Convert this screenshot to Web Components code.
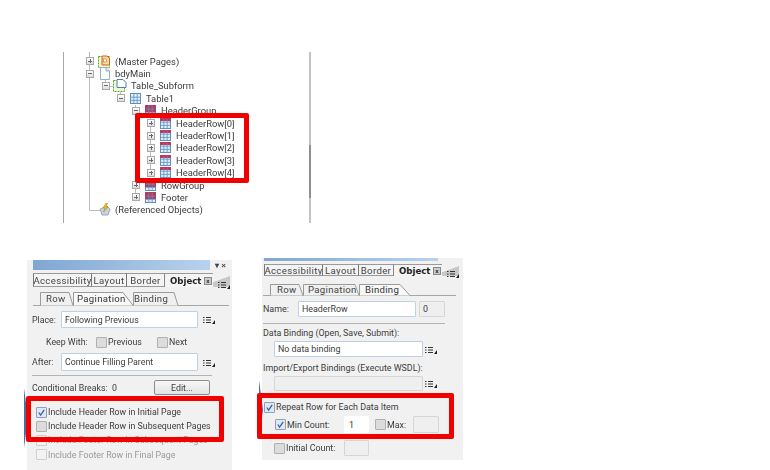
<!DOCTYPE html>
<html>
<head>
<meta charset="utf-8">
<title>Table header rows</title>
<style>
  html, body { margin: 0; background: #fff; }
  body { width: 770px; height: 470px; overflow: hidden; font: 9.5px Roboto, "Open Sans", sans-serif; color: #333; }
</style>
</head>
<body>
<screen-shot>
  <tree-view>
    <tree-row depth="0" toggle="plus" icon="master">(Master Pages)</tree-row>
    <tree-row depth="0" toggle="minus" icon="page">bdyMain</tree-row>
    <tree-row depth="1" toggle="minus" icon="subform">Table_Subform</tree-row>
    <tree-row depth="2" toggle="minus" icon="table">Table1</tree-row>
    <tree-row depth="3" toggle="minus" icon="group">HeaderGroup</tree-row>
    <tree-row depth="4" toggle="plus" icon="row">HeaderRow[0]</tree-row>
    <tree-row depth="4" toggle="plus" icon="row">HeaderRow[1]</tree-row>
    <tree-row depth="4" toggle="plus" icon="row">HeaderRow[2]</tree-row>
    <tree-row depth="4" toggle="plus" icon="row">HeaderRow[3]</tree-row>
    <tree-row depth="4" toggle="plus" icon="row">HeaderRow[4]</tree-row>
    <tree-row depth="3" toggle="plus" icon="group">RowGroup</tree-row>
    <tree-row depth="3" toggle="plus" icon="group">Footer</tree-row>
    <tree-row depth="0" icon="refs">(Referenced Objects)</tree-row>
  </tree-view>

  <object-panel style="left:27px;top:260px;width:205px;height:210px;font-size:8.8px" bar="177" barh="10" pad="6">
    <main-tabs slot="tabs" widths="58,35,38" h="14" style="padding-left:6px">
      <span>Accessibility</span><span>Layout</span><span>Border</span>
    </main-tabs>
    <sub-tab-strip slot="tabs" style="margin:5px 3px 0 6px;padding-left:7px">
      <sub-tab w="33" h="13" pl="6">Row</sub-tab>
      <sub-tab w="60" h="13" pl="4" active>Pagination</sub-tab>
      <sub-tab w="45" h="13" pl="1">Binding</sub-tab>
    </sub-tab-strip>

    <form-row style="margin-top:5px;height:17px">
      <span style="width:29px">Place:</span>
      <text-box w="137">Following Previous</text-box>
      <menu-icon style="margin-left:5px"></menu-icon>
    </form-row>
    <form-row style="margin-top:7px;height:14px;padding-left:14px">
      <span style="width:50px">Keep With:</span>
      <check-box style="width:61px">Previous</check-box>
      <check-box>Next</check-box>
    </form-row>
    <form-row style="margin-top:4px;height:18px">
      <span style="width:29px">After:</span>
      <text-box w="137">Continue Filling Parent</text-box>
      <menu-icon style="margin-left:5px"></menu-icon>
    </form-row>
    <panel-rule style="margin-top:4px;margin-right:20px"></panel-rule>
    <form-row style="margin-top:4px;height:15px">
      <span style="width:122px">Conditional Breaks:&nbsp; 0</span>
      <push-button w="56">Edit...</push-button>
    </form-row>
    <form-row style="margin-top:10px;height:14px;padding-left:4px"><check-box checked>Include Header Row in Initial Page</check-box></form-row>
    <form-row style="height:14px;padding-left:4px"><check-box>Include Header Row in Subsequent Pages</check-box></form-row>
    <form-row style="height:14.5px;padding-left:4px"><check-box disabled>Include Footer Row in Subsequent Pages</check-box></form-row>
    <form-row style="height:14.5px;padding-left:4px"><check-box disabled>Include Footer Row in Final Page</check-box></form-row>
  </object-panel>

  <object-panel style="left:262px;top:258px;width:201px;height:202px;font-size:8.9px" bar="174" barh="3" pad="2" wedge="122">
    <main-tabs slot="tabs" widths="58,36,35" h="12" style="margin-top:3px">
      <span>Accessibility</span><span>Layout</span><span>Border</span>
    </main-tabs>
    <sub-tab-strip slot="tabs" style="margin:8px 7px 0 1px;padding-left:7px">
      <sub-tab w="33" h="11" pl="7">Row</sub-tab>
      <sub-tab w="56" h="11" pl="5">Pagination</sub-tab>
      <sub-tab w="51" h="11" pl="6" active>Binding</sub-tab>
    </sub-tab-strip>

    <form-row style="margin-top:5px;height:16px">
      <span style="width:35px">Name:</span>
      <text-box w="118">HeaderRow</text-box>
      <text-box w="26" style="margin-left:3px" muted>0</text-box>
    </form-row>
    <panel-rule style="margin-top:6px;margin-right:18px"></panel-rule>
    <form-row style="margin-top:3px;height:12px"><span>Data Binding (Open, Save, Submit):</span></form-row>
    <form-row style="margin-top:2px;height:16px;padding-left:11px">
      <text-box w="149">No data binding</text-box>
      <menu-icon style="margin-left:2px"></menu-icon>
    </form-row>
    <form-row style="margin-top:5px;height:12px"><span>Import/Export Bindings (Execute WSDL):</span></form-row>
    <form-row style="margin-top:2px;height:15px;padding-left:11px">
      <text-box w="149" muted></text-box>
      <menu-icon style="margin-left:2px"></menu-icon>
    </form-row>
    <form-row style="margin-top:10px;height:12px;padding-left:1px"><check-box checked>Repeat Row for Each Data Item</check-box></form-row>
    <form-row style="margin-top:3px;height:17px;padding-left:12px">
      <check-box checked style="width:69px">Min Count:</check-box>
      <text-box w="25" plain>1</text-box>
      <check-box style="margin-left:6px;width:38px">Max:</check-box>
      <text-box w="26" muted></text-box>
    </form-row>
    <form-row style="margin-top:7px;height:16px;padding-left:11px">
      <check-box style="width:70px">Initial Count:</check-box>
      <text-box w="25" muted></text-box>
    </form-row>
  </object-panel>

  <red-mark style="left:135px;top:113px;width:114px;height:70px"></red-mark>
  <red-mark style="left:26px;top:396px;width:198px;height:46px"></red-mark>
  <red-mark style="left:257px;top:393px;width:197px;height:46px"></red-mark>
</screen-shot>

<script>
function tpl(html) {
  const t = document.createElement('template');
  t.innerHTML = html;
  return t;
}

class Base extends HTMLElement {
  constructor() {
    super();
    this.attachShadow({ mode: 'open' });
    this.shadowRoot.appendChild(this.constructor.template.content.cloneNode(true));
  }
}

class ScreenShot extends Base {
  static template = tpl(`<style>
    :host { display: block; position: relative; width: 770px; height: 470px; overflow: hidden; }
  </style><slot></slot>`);
}

const gridIcon = (head, color) => `<svg width="11" height="11" viewBox="0 0 11 11">
  <rect x=".5" y=".5" width="10" height="10" fill="#e3edf7" stroke="#5b90bf"/>
  <rect x="0" y="0" width="11" height="${head}" fill="${color}"/>
  <path d="M3.800 1v9M7.200 1v9M1 4.200h9M1 7.400h9" stroke="#5b90bf" stroke-width=".8"/></svg>`;

const treeIcons = {
  master: `<svg style="margin-left:-1px" width="13" height="13" viewBox="0 0 13 13">
    <rect x=".5" y="1.500" width="11" height="11" fill="#eef7d8" stroke="#5aa82a" stroke-dasharray="2 1"/>
    <path d="M4 1h5l2.500 2.500V10H4z" fill="#f9d9a8" stroke="#c9651a"/><rect x="5.500" y="4" width="3" height="3" fill="#fff" stroke="#c9651a" stroke-width=".6"/></svg>`,
  page: `<svg style="margin-left:1px" width="10" height="13" viewBox="0 0 10 13">
    <path d="M.5.500h5.500l3.500 3.500v8.500H.5z" fill="#fff" stroke="#94aec8"/><path d="M6 .5V4h3.500" fill="#dbe6f1" stroke="#94aec8"/></svg>`,
  subform: `<svg style="margin-left:-2px" width="14" height="13" viewBox="0 0 14 13">
    <rect x=".5" y="1.500" width="11" height="11" fill="#f0f8dc" stroke="#5aa82a" stroke-dasharray="2 1"/>
    <path d="M4 .5h6l3 3v5H4z" fill="#fff" stroke="#4e7fae"/></svg>`,
  table: gridIcon(0, '#8fb6d8'),
  group: gridIcon(7, '#b63a60'),
  row: gridIcon(3, '#c2355a'),
  refs: `<svg style="margin-left:-1px" width="14" height="13" viewBox="0 0 14 13">
    <path d="M2 6l7-3 3 3-2 6H4z" fill="#c6d2e2" stroke="#8b9bb0" stroke-width=".8"/>
    <path d="M8 0L5 5h2L5.500 9 10 4H8l1.500-4z" fill="#f0c020" stroke="#a9820c" stroke-width=".5"/></svg>`
};

class TreeView extends Base {
  static template = tpl(`<style>
    :host { display: block; position: absolute; left: 63px; top: 52px; width: 248px; height: 171px; box-sizing: border-box;
      border-left: 1px solid #a8a8a8; border-right: 2px solid #c4c4c4; padding-top: 3px; filter: blur(.3px); }
    :host::after { content: ""; position: absolute; right: -2px; top: 93px; width: 2px; height: 53px; background: #8f8f8f; }
    svg { position: absolute; left: 0; top: 0; }
    ::slotted(*) { position: relative; }
  </style>
  <svg width="245" height="171" fill="none" stroke="#bdbdbd" stroke-width="1">
    <path d="M25.500 0V158.500H36M41.500 28V34.500H50M56.500 40V47M71.500 53V59.500M86.500 65V121.500M71.500 65V146.500"/>
  </svg>
  <slot></slot>`);
}

class TreeRow extends Base {
  static template = tpl(`<style>
    :host { display: flex; align-items: center; height: 12.4px; font: 9.4px Roboto, "Open Sans", sans-serif; color: #3a3a3a; white-space: nowrap; }
    .toggle { width: 6px; height: 6px; border: 1px solid #a9a9a9; background: linear-gradient(#fff, #ddd); flex: none; position: relative; margin-right: 5px; }
    .toggle.none { visibility: hidden; }
    .toggle::before { content: ""; position: absolute; left: 1px; right: 1px; top: 2.500px; height: 1px; background: #667; }
    .toggle.plus::after { content: ""; position: absolute; top: 1px; bottom: 1px; left: 2.500px; width: 1px; background: #667; }
    .icon { display: flex; width: 15px; flex: none; }
    .label { margin-left: 1px; }
  </style><span class="toggle"></span><span class="icon"></span><span class="label"><slot></slot></span>`);
  connectedCallback() {
    const depth = +this.getAttribute('depth');
    this.style.paddingLeft = (22 + [0, 16, 31, 46, 61][depth]) + 'px';
    const t = this.shadowRoot.querySelector('.toggle');
    t.className = 'toggle ' + (this.getAttribute('toggle') || 'none');
    this.shadowRoot.querySelector('.icon').innerHTML = treeIcons[this.getAttribute('icon')];
  }
}

class ObjectPanel extends Base {
  static template = tpl(`<style>
    :host { display: flex; flex-direction: column; position: absolute; box-sizing: border-box; background: #f1f1f1;
      font: 9.4px Roboto, "Open Sans", sans-serif; color: #3c3c3c; filter: blur(.3px); }
    .bar { flex: none; display: flex; align-items: center; justify-content: flex-end; }
    .fill { background: linear-gradient(90deg, #7fa6d3, #b9d2ec); }
    .ctl { position: absolute; right: 6px; top: 1px; font: bold 8px "Liberation Sans", sans-serif; color: #444; }
    .wedge { position: absolute; left: -3px; width: 0; height: 0; border-left: 4px solid #47709f; border-top: 30px solid transparent; border-bottom: 30px solid transparent; }
    .body { display: flex; flex-direction: column; }
  </style>
  <div class="bar"><div class="fill"></div></div>
  <span class="ctl">▾ ×</span>
  <div class="wedge"></div>
  <slot name="tabs"></slot>
  <div class="body"><slot></slot></div>`);
  connectedCallback() {
    const pad = this.getAttribute('pad');
    const fill = this.shadowRoot.querySelector('.fill');
    fill.style.cssText = `width:${this.getAttribute('bar')}px;height:${this.getAttribute('barh')}px;margin-left:${pad}px;margin-right:auto`;
    this.shadowRoot.querySelector('.body').style.paddingLeft = (+pad - 1) + 'px';
    const wedge = this.shadowRoot.querySelector('.wedge');
    wedge.style.top = (this.getAttribute('wedge') || 128) + 'px';
    if (this.hasAttribute('wedge')) this.shadowRoot.querySelector('.ctl').style.display = 'none';
  }
}

class MainTabs extends Base {
  static template = tpl(`<style>
    :host { display: flex; align-items: stretch; margin-top: 3px; padding-left: 2px; flex: none; font: 9.6px Roboto, "Open Sans", sans-serif; color: #444; letter-spacing: .35px; }
    ::slotted(span) { display: flex; align-items: center; justify-content: center; box-sizing: border-box; border: 1px solid #9a9a9a; border-left-color: #777; border-right: 0; background: #f4f4f4; white-space: nowrap; overflow: hidden; }
    .obj { display: flex; align-items: center; border-left: 1px solid #888; border-top: 1px solid #9a9a9a; padding: 0 1px 0 5px; font: bold 8.600px "DejaVu Sans", sans-serif; color: #222; letter-spacing: 0; width: 49px; box-sizing: border-box; background: #f4f4f4; }
    .x { width: 6px; height: 6px; border: 1px solid #888; background: #ccc; margin-left: auto; font: bold 6px/6px "Liberation Sans", sans-serif; text-align: center; color: #222; }
    .corner { display: flex; align-items: flex-end; justify-content: flex-end; width: 17px; background: linear-gradient(160deg, #f1f1f1 45%, #c8c8c8 46%); }
  </style><slot></slot><div class="obj">Object<span class="x">x</span></div><div class="corner"><menu-icon></menu-icon></div>`);
  connectedCallback() {
    this.style.height = this.getAttribute('h') + 'px';
    const w = this.getAttribute('widths').split(',');
    [...this.children].forEach((c, i) => { c.style.width = w[i] + 'px'; });
  }
}

class SubTabStrip extends Base {
  static template = tpl(`<style>
    :host { display: flex; flex: none; border-bottom: 1px solid #a6a6a6; }
  </style><slot></slot>`);
}

class SubTab extends Base {
  static template = tpl(`<style>
    :host { display: block; position: relative; flex: none; font: 9.6px Roboto, "Open Sans", sans-serif; color: #444; letter-spacing: .3px; }
    svg { position: absolute; left: 0; top: 0; }
    span { position: relative; display: flex; align-items: center; height: 100%; }
    :host([active]) { color: #333; }
  </style><svg fill="none"></svg><span><slot></slot></span>`);
  connectedCallback() {
    const w = +this.getAttribute('w'), h = +this.getAttribute('h');
    this.style.width = w + 'px';
    this.style.height = h + 'px';
    this.shadowRoot.querySelector('span').style.paddingLeft = this.getAttribute('pl') + 'px';
    const svg = this.shadowRoot.querySelector('svg');
    svg.setAttribute('width', w + 1);
    svg.setAttribute('height', h + 1);
    const active = this.hasAttribute('active');
    const slant = active ? 10 : 4;
    svg.innerHTML = `<path d="M.5 ${h + .5}V.5H${w - slant}L${w} ${h + .5}" stroke="#9a9a9a" fill="${active ? '#f8f8f8' : '#f0f0f0'}"/>`;
  }
}

class FormRow extends Base {
  static template = tpl(`<style>
    :host { display: flex; align-items: center; flex: none; white-space: nowrap; }
    ::slotted(span) { flex: none; }
  </style><slot></slot>`);
}

class TextBox extends Base {
  static template = tpl(`<style>
    :host { display: flex; align-items: center; flex: none; align-self: stretch; box-sizing: border-box; padding-left: 3px; background: #fff; border: 1px solid #bcd0e6; border-radius: 1px; overflow: hidden; }
    :host([muted]) { background: #efefef; border-color: #d6d6d6; }
    :host([plain]) { border-color: #fff; padding-left: 4px; }
  </style><slot></slot>`);
  connectedCallback() { this.style.width = this.getAttribute('w') + 'px'; }
}

class CheckBox extends Base {
  static template = tpl(`<style>
    :host { display: inline-flex; align-items: center; flex: none; white-space: nowrap; }
    .box { width: 9px; height: 9px; flex: none; margin-right: 1px; border: 1px solid #b0b0b0; background: #dcdcdc; display: flex; border-radius: 1px; }
    :host([checked]) .box { background: #dfe8f4; border-color: #8ea0bb; }
    :host([disabled]) .box { background: #f3f3f3; border-color: #cfcfcf; }
    :host([disabled]) { color: #9a9a9a; }
    svg { display: none; }
    :host([checked]) svg { display: block; }
  </style><span class="box"><svg width="9" height="9" viewBox="0 0 10 10"><path d="M2 5l2 3 4-6" fill="none" stroke="#3a5fa5" stroke-width="1.400"/></svg></span><slot></slot>`);
}

class MenuIcon extends Base {
  static template = tpl(`<style>
    :host { display: inline-block; flex: none; width: 12px; height: 7px; }
  </style><svg width="12" height="7" viewBox="0 0 12 7">
    <path d="M0 .5h1.500M0 3h1.500M0 5.500h1.500M3 .5h5M3 3h5M3 5.500h5" stroke="#333"/><path d="M12 3v4H9z" fill="#222"/></svg>`);
}

class PanelRule extends Base {
  static template = tpl(`<style>
    :host { display: block; height: 1px; flex: none; background: #b4b4b4; }
  </style>`);
}

class PushButton extends Base {
  static template = tpl(`<style>
    :host { display: flex; align-items: center; justify-content: center; flex: none; align-self: stretch; box-sizing: border-box; border: 1px solid #8d8d8d; border-radius: 2px; background: linear-gradient(#f7f7f7, #e3e3e3); }
  </style><slot></slot>`);
  connectedCallback() { this.style.width = this.getAttribute('w') + 'px'; }
}

class RedMark extends Base {
  static template = tpl(`<style>
    :host { display: block; position: absolute; box-sizing: border-box; border: 5px solid #f10000; border-radius: 2px; }
  </style>`);
}

customElements.define('screen-shot', ScreenShot);
customElements.define('tree-view', TreeView);
customElements.define('tree-row', TreeRow);
customElements.define('object-panel', ObjectPanel);
customElements.define('main-tabs', MainTabs);
customElements.define('sub-tab-strip', SubTabStrip);
customElements.define('sub-tab', SubTab);
customElements.define('form-row', FormRow);
customElements.define('text-box', TextBox);
customElements.define('check-box', CheckBox);
customElements.define('menu-icon', MenuIcon);
customElements.define('panel-rule', PanelRule);
customElements.define('push-button', PushButton);
customElements.define('red-mark', RedMark);
</script>
</body>
</html>
